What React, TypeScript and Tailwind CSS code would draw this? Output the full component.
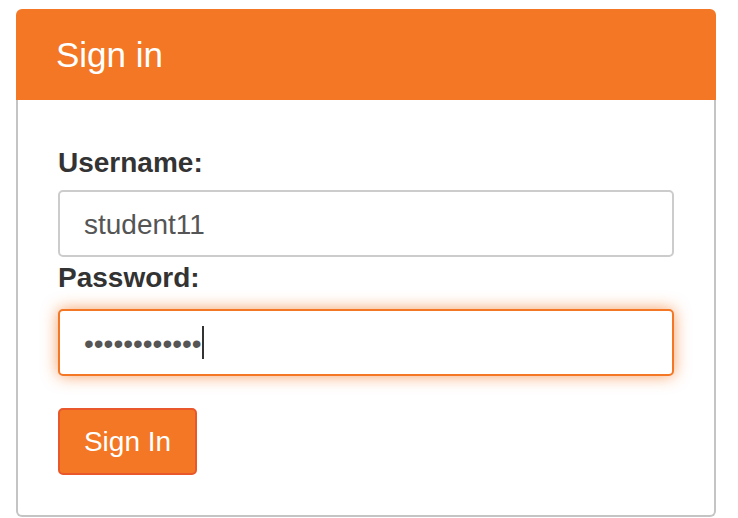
import React from 'react';

export default function App() {
  return (
    <div className="min-h-[518px] bg-white pt-[9px] pl-4" style={{ fontFamily: '"Liberation Sans", Arial, sans-serif' }}>
      <div className="w-[700px]">
        {/* Header */}
        <div className="flex h-[91px] items-center rounded-t-[6px] bg-[#f37725] pt-px pl-10">
          <h1 className="text-[35px] leading-[40px] font-normal text-white">Sign in</h1>
        </div>

        {/* Body */}
        <form
          onSubmit={(e) => e.preventDefault()}
          className="flex flex-col rounded-b-[6px] border-x-2 border-b-2 border-[#c4c4c4] px-10 pt-[43px] pb-10"
        >
          <label className="mb-[7px] block text-[28px] leading-[40px] font-bold text-[#333333]">Username:</label>
          <input
            type="text"
            defaultValue="student11"
            className="h-[67px] w-full rounded-[5px] border-2 border-[#cccccc] bg-white px-6 pt-[2px] text-[28px] text-[#555555] outline-none"
          />

          <label className="mt-px mb-[11px] block text-[28px] leading-[40px] font-bold text-[#333333]">Password:</label>
          <div className="relative">
            <input
              type="password"
              defaultValue="student11pwd"
              className="h-[67px] w-full rounded-[5px] border-2 border-[#f37725] bg-white px-6 pt-[2px] text-[28px] text-[#555555] caret-transparent shadow-[0_0_16px_rgba(243,119,37,0.7)] outline-none"
            />
            <span className="absolute top-[17px] left-[144px] h-[33px] w-[1.5px] bg-[#333333]" />
          </div>

          <div className="mt-8">
            <button
              type="submit"
              className="flex h-[67px] w-[139px] items-center justify-center rounded-[5px] border-2 border-[#e8582a] bg-[#f37725] pt-px text-[28px] text-white"
            >
              Sign In
            </button>
          </div>
        </form>
      </div>
    </div>
  );
}
